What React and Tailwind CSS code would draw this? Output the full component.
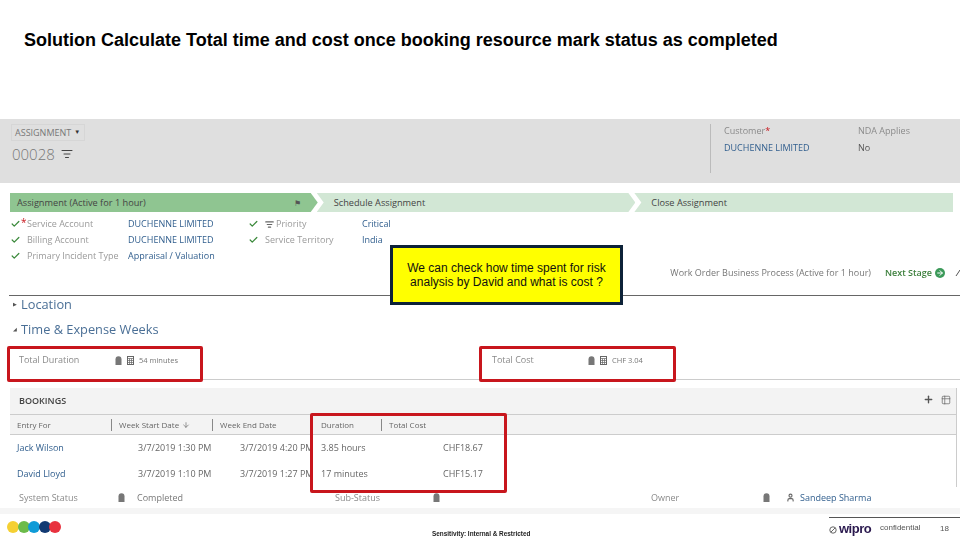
import React from "react";
import { Check, Plus, ArrowDown, Table2, User, ListFilter, ArrowRight } from "lucide-react";

const BLUE = "text-[#33608f]";

function LockIcon({ className = "" }) {
  return (
    <svg width="7" height="9" viewBox="0 0 7 9" className={className}>
      <path d="M0.5 3.2 A3 3 0 0 1 6.5 3.2 V9 H0.5 Z" fill="#777" />
    </svg>
  );
}

function CalcIcon() {
  return (
    <svg width="7" height="9" viewBox="0 0 7 9">
      <rect x="0.5" y="0.5" width="6" height="8" fill="none" stroke="#666" />
      <path d="M0.5 2.5 H6.5 M0.5 4.5 H6.5 M0.5 6.5 H6.5 M2.5 2.5 V8.5 M4.5 2.5 V8.5" stroke="#666" strokeWidth="0.7" />
    </svg>
  );
}

function Stage({ label, active, first, last, children }) {
  const shape = last
    ? "[clip-path:polygon(0_0,100%_0,100%_100%,0_100%,7px_50%)]"
    : first
      ? "[clip-path:polygon(0_0,calc(100%-7px)_0,100%_50%,calc(100%-7px)_100%,0_100%)]"
      : "[clip-path:polygon(0_0,calc(100%-7px)_0,100%_50%,calc(100%-7px)_100%,0_100%,7px_50%)]";
  return (
    <div
      className={`flex items-center h-full ${shape} ${active ? "bg-[#8fc591] w-[309px] pl-[7px] pr-[17px] justify-between" : "bg-[#d2e7d5] w-[320px] -ml-[1px] pl-[17px]"} ${last ? "w-[318px]" : ""} text-[9.2px] text-[#444]`}
    >
      <span>{label}</span>
      {children}
    </div>
  );
}

function FieldRow({ label, value, required, filter, labelWidth }) {
  return (
    <div className="flex items-center h-[16px]">
      <Check size={10} strokeWidth={3} className="text-[#3c8a3c] w-[13px] shrink-0" />
      <div className={`relative flex items-center ${labelWidth} text-[#9a9a9a] pl-[5px] whitespace-nowrap`}>
        {required && <span className="absolute left-[-1px] -top-[2px] text-[#c8161d] text-[10px]">*</span>}
        {filter && <ListFilter size={9} strokeWidth={3} className="text-[#666] mr-[2px]" />}
        {label}
      </div>
      <span className={BLUE}>{value}</span>
    </div>
  );
}

function BookingRow({ name, start, end, duration, cost }) {
  return (
    <div className="flex items-center h-[26px] text-[9px] text-[#666]">
      <span className={`w-[128px] pl-[7px] ${BLUE}`}>{name}</span>
      <span className="w-[102px]">{start}</span>
      <span className="w-[81px] whitespace-nowrap overflow-hidden">{end}</span>
      <span className="w-[122px]">{duration}</span>
      <span>{cost}</span>
    </div>
  );
}

function App() {
  return (
    <div className="relative w-[960px] h-[540px] overflow-hidden bg-white font-['Liberation_Sans',sans-serif]">
      <div className="h-[119px] pl-[24px] pt-[31px]">
        <h1 className="text-[18px] leading-[18px] font-bold text-black">
          Solution Calculate Total time and cost once booking resource mark status as completed
        </h1>
      </div>

      <div className="font-['Open_Sans',sans-serif] blur-[0.35px]">
        {/* record header */}
        <div className="flex h-[64px] bg-[#dfdfdf] text-[9px] text-[#8a8a8a]">
          <div className="w-[710px] pl-[11px] pt-[5px]">
            <div className="flex items-center h-[17px] w-[74px] border border-[#d6d6d6] pl-[3px] text-[9px] text-[#777] whitespace-nowrap">
              ASSIGNMENT
              <span className="ml-[3px] text-[6px] text-[#333]">▼</span>
            </div>
            <div className="flex items-center mt-[3px] pl-[1px] text-[15px] font-light leading-[20px] text-[#777]">
              00028
              <ListFilter size={12} className="ml-[6px] text-[#444]" />
            </div>
          </div>
          <div className="mt-[5px] h-[49px] pl-[13px] border-l border-[#bbb] w-[148px]">
            <div className="h-[17px]">Customer<span className="text-[#c8161d]">*</span></div>
            <div className={BLUE}>DUCHENNE LIMITED</div>
          </div>
          <div className="mt-[5px]">
            <div className="h-[17px]">NDA Applies</div>
            <div className="text-[#555]">No</div>
          </div>
        </div>

        {/* process stages */}
        <div className="flex h-[19px] mt-[10px] ml-[10px] w-[943px]">
          <Stage label="Assignment (Active for 1 hour)" active first>
            <span className="text-[8px] text-[#555]">⚑</span>
          </Stage>
          <Stage label="Schedule Assignment" />
          <Stage label="Close Assignment" last />
        </div>

        {/* stage fields */}
        <div className="flex h-[83px] pt-[4px] pl-[9px] text-[9px]">
          <div className="w-[238px]">
            <FieldRow label="Service Account" value="DUCHENNE LIMITED" required labelWidth="w-[106px]" />
            <FieldRow label="Billing Account" value="DUCHENNE LIMITED" labelWidth="w-[106px]" />
            <FieldRow label="Primary Incident Type" value="Appraisal / Valuation" labelWidth="w-[106px]" />
          </div>
          <div>
            <FieldRow label="Priority" value="Critical" filter labelWidth="w-[102px]" />
            <FieldRow label="Service Territory" value="India" labelWidth="w-[102px]" />
          </div>
        </div>

        <div className="flex items-center justify-end h-[0px] -mt-[22px] mb-[22px] text-[9px] text-[#777] whitespace-nowrap">
          <span>Work Order Business Process (Active for 1 hour)</span>
          <span className="ml-[14px] font-semibold text-[#3c7f3c]">Next Stage</span>
          <span className="ml-[3px] flex items-center justify-center w-[10px] h-[10px] rounded-full bg-[#3c9a5a]">
            <ArrowRight size={8} strokeWidth={3} className="text-white" />
          </span>
          <svg width="10" height="8" viewBox="0 0 10 8" className="ml-[10px] mr-[-5px]">
            <path d="M1 7 L5 1 L9 7" fill="none" stroke="#555" strokeWidth="1" />
          </svg>
        </div>

        {/* sections */}
        <div className="ml-[9px] border-t border-[#666] text-[12.8px] text-[#4a6f96]">
          <div className="flex items-center h-[17px]">
            <span className="w-[12px] pl-[4px] text-[5px] text-[#555]">▶</span>Location
          </div>
          <div className="flex items-center h-[17px] mt-[8px]">
            <span className="w-[12px] pl-[4px] text-[5px] text-[#555]">◢</span>Time &amp; Expense Weeks
          </div>
        </div>

        <div className="flex h-[29px] mt-[13px] ml-[10px] border-b border-[#ccc] text-[9px] text-[#8a8a8a] pt-[2px]">
          <div className="flex items-start w-[472px] pl-[9px]">
            <span className="w-[96px]">Total Duration</span>
            <div className="flex items-center gap-[5px] mt-[2px]">
              <LockIcon />
              <CalcIcon />
              <span className="text-[#777] text-[7.5px]">54 minutes</span>
            </div>
          </div>
          <div className="flex items-start pl-[10px]">
            <span className="w-[96px]">Total Cost</span>
            <div className="flex items-center gap-[5px] mt-[2px]">
              <LockIcon />
              <CalcIcon />
              <span className="text-[#777] text-[7.5px]">CHF 3.04</span>
            </div>
          </div>
        </div>

        {/* bookings grid */}
        <div className="mt-[8px] ml-[10px] w-[947px] border-r border-[#ccc] h-[99px]">
          <div className="flex items-center justify-between h-[27px] bg-[#f3f3f3] border-b border-[#ccc] pl-[9px] pr-[5px] text-[9px] font-semibold text-[#444]">
            <span>BOOKINGS</span>
            <div className="flex items-center gap-[7px] -mt-[3px]">
              <Plus size={11} strokeWidth={3} className="text-[#555]" />
              <Table2 size={10} className="text-[#777]" />
            </div>
          </div>
          <div className="flex items-center h-[20px] bg-[#f3f3f3] border-b border-[#ccc] text-[8px] text-[#666]">
            <span className="w-[101px] pl-[7px]">Entry For</span>
            <span className="w-[101px] pl-[7px] border-l border-[#888] flex items-center">
              Week Start Date
              <ArrowDown size={8} className="ml-[3px]" />
            </span>
            <span className="w-[109px] pl-[7px] border-l border-[#888]">Week End Date</span>
            <span className="w-[60px]">Duration</span>
            <span className="pl-[7px] border-l border-[#888]">Total Cost</span>
          </div>
          <BookingRow name="Jack Wilson" start="3/7/2019 1:30 PM" end="3/7/2019 4:20 PM" duration="3.85 hours" cost="CHF18.67" />
          <BookingRow name="David Lloyd" start="3/7/2019 1:10 PM" end="3/7/2019 1:27 PM" duration="17 minutes" cost="CHF15.17" />
        </div>

        {/* status row */}
        <div className="flex items-center h-[21px] bg-white text-[9px] text-[#8a8a8a]">
          <span className="w-[118px] pl-[19px]">System Status</span>
          <LockIcon />
          <span className="ml-[12px] w-[198px] text-[#777]">Completed</span>
          <span className="w-[98px]">Sub-Status</span>
          <LockIcon />
          <span className="ml-[211px] w-[112px]">Owner</span>
          <LockIcon />
          <User size={9} strokeWidth={3} className="ml-[16px] text-[#666]" />
          <span className={`ml-[5px] ${BLUE}`}>Sandeep Sharma</span>
        </div>
        <div className="h-[6px] bg-[#f5f5f5]" />
      </div>

      {/* slide footer */}
      <div className="flex h-[26px] relative">
        <div className="flex items-center w-[432px] pl-[7px] pt-[2px] h-[24px]">
          <span className="w-[12px] h-[12px] rounded-full bg-[#f5d033]" />
          <span className="w-[12px] h-[12px] rounded-full bg-[#6cbb4a] -ml-[1.5px]" />
          <span className="w-[12px] h-[12px] rounded-full bg-[#0f9bd7] -ml-[1.5px]" />
          <span className="w-[12px] h-[12px] rounded-full bg-[#123a73] -ml-[1.5px]" />
          <span className="w-[12px] h-[12px] rounded-full bg-[#e8323f] -ml-[1.5px]" />
        </div>
        <span className="w-[397px] pt-[16px] text-[6.4px] leading-[7px] font-bold text-[#222] whitespace-nowrap">
          Sensitivity: Internal &amp; Restricted
        </span>
        <div className="flex-1 flex border-t border-[#555] mt-[3px] h-[22px] pt-[3px]">
          <svg width="8" height="8" viewBox="0 0 8 8" className="mt-[5px] mr-[2px]">
            <circle cx="4" cy="4" r="3.2" fill="none" stroke="#666" strokeWidth="1" />
            <path d="M2 6 L6 2" stroke="#666" />
          </svg>
          <span className="w-[41px] text-[13px] leading-[15px] font-bold tracking-[-0.5px] text-[#2b1a4f]">wipro</span>
          <span className="w-[60px] text-[8px] leading-[9px] pt-[2px] text-[#555]">confidential</span>
          <span className="text-[8px] leading-[9px] pt-[3px] text-[#555]">18</span>
        </div>
      </div>

      {/* annotations over the screenshot */}
      <div className="absolute left-[390px] top-[245px] w-[233px] h-[60px] border-[3px] border-[#0d2238] bg-[#ffff00] flex items-center justify-center text-center text-[12px] leading-[14px] text-[#111]">
        <p>
          We can check how time spent for risk
          <br />
          analysis by David and what is cost ?
        </p>
      </div>
      <div className="absolute left-[7px] top-[346px] w-[196px] h-[36px] border-[3px] border-[#c8161d] rounded-[2px]" />
      <div className="absolute left-[479px] top-[346px] w-[197px] h-[36px] border-[3px] border-[#c8161d] rounded-[2px]" />
      <div className="absolute left-[310px] top-[413px] w-[197px] h-[80px] border-[3px] border-[#c8161d] rounded-[2px]" />
    </div>
  );
}

export default App;
